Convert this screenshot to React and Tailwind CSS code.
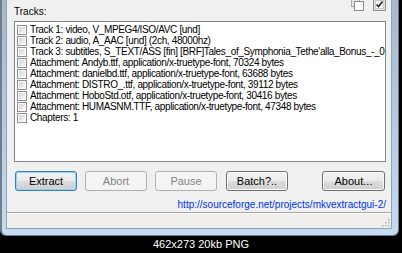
import React from 'react';

const rows = [
  'Track 1: video, V_MPEG4/ISO/AVC [und]',
  'Track 2: audio, A_AAC [und]  (2ch, 48000hz)',
  "Track 3: subtitles, S_TEXT/ASS [fin] [BRF]Tales_of_Symphonia_Tethe'alla_Bonus_-_0",
  'Attachment: Andyb.ttf, application/x-truetype-font, 70324 bytes',
  'Attachment: danielbd.ttf, application/x-truetype-font, 63688 bytes',
  'Attachment: DISTRO_.ttf, application/x-truetype-font, 39112 bytes',
  'Attachment: HoboStd.otf, application/x-truetype-font, 30416 bytes',
  'Attachment: HUMASNM.TTF, application/x-truetype-font, 47348 bytes',
  'Chapters: 1',
];

const Checkbox = () => (
  <div className="w-[10px] h-[10px] shrink-0 border border-[#8e8f8f] bg-white p-px">
    <div className="w-full h-full bg-linear-to-br from-[#d4d4d4] to-[#f7f7f7]" />
  </div>
);

const Button = ({ label, variant = 'normal', className = '' }) => {
  const styles = {
    normal: 'border-[#707070] text-black bg-[linear-gradient(#f2f2f2,#ebebeb_50%,#dddddd_50%,#cfcfcf)] shadow-[inset_0_0_0_1px_#fcfcfc]',
    focus: 'border-[#3c7fb1] text-black bg-[linear-gradient(#f2f2f2,#ebebeb_50%,#dddddd_50%,#cfcfcf)] shadow-[inset_0_0_0_1px_#8fd3f5]',
    disabled: 'border-[#adb2b5] text-[#838383] bg-[#f4f4f4]',
  };
  return (
    <div className={`w-[62px] h-[20px] rounded-[3px] border flex items-center justify-center text-[11px] ${styles[variant]} ${className}`}>
      {label}
    </div>
  );
};

const App = () => {
  return (
    <div className="w-[402px] h-[253px] bg-black overflow-hidden font-['Liberation_Sans',Arial,sans-serif]">
      <div className="w-[399px] h-[236px] rounded-b-[6px] border-l-2 border-r border-b border-[#6f7d8c] bg-linear-to-b from-[#a7b8ca] to-[#c4dbf2] pl-[4px] pr-[6px] pb-[6px]">
        <div className="h-[229px] bg-[#f0f0f0] border-l border-r border-b border-[#8fa3b8] flex flex-col">
          {/* header */}
          <div className="h-[21px] flex items-start justify-between pl-[7px] pr-[5px]">
            <div className="mt-[6px] text-[10px] leading-[12px] text-black">Tracks:</div>
            <div className="flex gap-[9px] -mt-[2px]">
              <svg width="13" height="13" viewBox="0 0 13 13">
                <rect x="0.5" y="0.5" width="8" height="8" fill="#e6e6e6" stroke="#a8a8a8" />
                <rect x="3.5" y="3.5" width="9" height="9" fill="#fafafa" stroke="#8c8c8c" />
              </svg>
              <svg width="13" height="13" viewBox="0 0 13 13">
                <rect x="0.5" y="0.5" width="12" height="12" fill="#e2e2e2" stroke="#8e8f8f" />
                <rect x="2.5" y="2.5" width="8" height="8" fill="#f8f8f8" stroke="#c9c9c9" />
                <path d="M3.5 6.5 L5.5 8.5 L9.5 3.5" fill="none" stroke="#222" strokeWidth="1.6" />
              </svg>
            </div>
          </div>

          {/* list */}
          <div className="mx-[7px] mr-[5px] h-[141px] bg-white border border-[#828790] pt-[2px] pl-[2px] overflow-hidden">
            {rows.map((row, index) => (
              <div key={index} className="h-[11px] flex items-center gap-[3px]">
                <Checkbox />
                <span className="whitespace-nowrap text-[10px] leading-[11px] tracking-[-0.35px] text-black">{row}</span>
              </div>
            ))}
          </div>

          {/* buttons */}
          <div className="mt-[9px] h-[20px] flex pl-[8px] pr-[6px]">
            <Button label="Extract" variant="focus" />
            <Button label="Abort" variant="disabled" className="ml-[8px]" />
            <Button label="Pause" variant="disabled" className="ml-[8px]" />
            <Button label="Batch?.." className="ml-[9px]" />
            <Button label="About..." className="ml-auto w-[63px]" />
          </div>

          {/* link */}
          <div className="mt-[7px] h-[14px] flex justify-end pr-[5px]">
            <span className="text-[10px] leading-[14px] text-[#0033ee]">
              http://sourceforge.net/projects/mkvextractgui-2/
            </span>
          </div>

          {/* status bar */}
          <div className="flex-1 border-t border-[#a6a6a6] bg-[#f1efed] shadow-[inset_0_1px_0_#ffffff] flex justify-end items-end pr-[1px] pb-[1px]">
            <svg width="8" height="8" viewBox="0 0 8 8">
              <rect x="6" y="0" width="1.5" height="1.5" fill="#b0b0b0" />
              <rect x="3" y="3" width="1.5" height="1.5" fill="#b0b0b0" />
              <rect x="6" y="3" width="1.5" height="1.5" fill="#b0b0b0" />
              <rect x="0" y="6" width="1.5" height="1.5" fill="#b0b0b0" />
              <rect x="3" y="6" width="1.5" height="1.5" fill="#b0b0b0" />
              <rect x="6" y="6" width="1.5" height="1.5" fill="#b0b0b0" />
            </svg>
          </div>
        </div>
      </div>

      {/* caption */}
      <div className="h-[17px] flex items-center justify-center text-[11px] text-white">
        462x273 20kb PNG
      </div>
    </div>
  );
};

export default App;
